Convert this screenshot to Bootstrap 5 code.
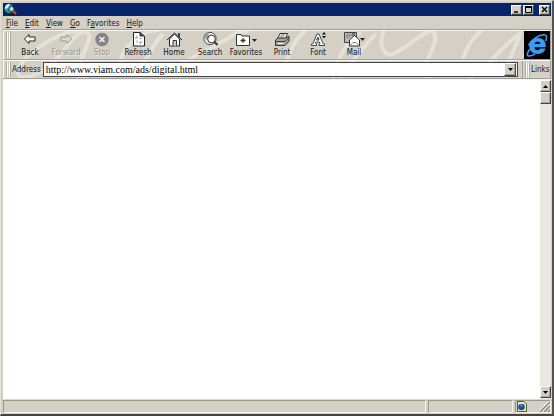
<!DOCTYPE html>
<html lang="en">
<head>
<meta charset="utf-8">
<meta name="viewport" content="width=device-width, initial-scale=1">
<title>Browser window</title>
<link href="https://cdn.jsdelivr.net/npm/bootstrap@5.3.0/dist/css/bootstrap.min.css" rel="stylesheet">
<style>
:root{--face:#d4d0c5;--shade:#8c8a85;--hi:#f8f7f2;--ink:#16161c}
body{font-family:"DejaVu Sans Condensed","DejaVu Sans",sans-serif;font-size:8px;line-height:9px;color:var(--ink);background:var(--face)}
svg{display:block;flex:none}
button{color:inherit;font:inherit;padding:0;border:0;background:none}
.win{border:1px solid #e2dfd5;border-right:2px solid #55534f;border-bottom:2px solid #454440;padding:2px 1px 1px 2px;background:var(--face)}
.titlebar{height:13px;background:#08246b;padding:0 1px 0 1px;gap:1px}
.raised{background:var(--face);border:1px solid;border-color:#fff #444 #444 #fff;box-shadow:inset -1px -1px 0 #aaa79e;display:flex;align-items:center;justify-content:center}
.wbtn{width:11px;height:10px}
.menus{height:14px;border-bottom:1px solid #a19f9b;padding:1px 0 0 3px;gap:7px}
.menus a{color:var(--ink);text-decoration:none}
.menus u{text-decoration-thickness:1px;text-underline-offset:1px}
.bars{border-bottom:1px solid #a19f9b;overflow:hidden}
.swirl{position:absolute;left:0;top:0;z-index:0}
.tools,.addr{z-index:1}
.tools{height:30px;border:1px solid var(--hi);border-right-color:#a19f9b;border-bottom-color:#a19f9b}
.addr{height:18px;border-top:1px solid var(--hi);border-left:1px solid var(--hi);border-right:1px solid #a19f9b}
.addr label{margin-right:2px}
.grip{width:5px;margin:1px 1px 1px 2px;flex:none;border:solid #aaa8a3;border-width:0 1px;background:linear-gradient(90deg,#fff 0 1px,#c9c6bd 1px 2px,#fff 2px 3px)}
.tool{width:36px;display:flex;flex-direction:column;align-items:center;justify-content:flex-end;padding-bottom:2px;flex:none}
.tool:disabled{color:#999792;text-shadow:1px 1px 0 #efece4}
.brand{width:26px;background:#000}
.field{height:15px;border:1px solid #45434a;background:#fff}
.url{font-family:"Liberation Serif",serif;font-size:10px;line-height:13px;color:#000;background:#fff;border:0;padding:0 2px;min-width:0;border-radius:0}
.drop{width:12px;margin-right:1px}
.links{width:28px;border-left:1px solid #a19f9b}
.page-area{background:#fff;border-top:1px solid #f5f4ef}
.scroller{width:11px;background:#e9e7e1;padding-bottom:1px}
.scroller .raised{width:11px;height:12px}
.status{height:14px;border-top:1px solid #dedbd1;gap:2px}
.pane{border:1px solid;border-color:#999790 #f5f3ee #f5f3ee #999790}
.pane-mid{width:85px}.pane-end{width:36px}
</style>
<script src="https://cdn.jsdelivr.net/npm/bootstrap@5.3.0/dist/js/bootstrap.bundle.min.js"></script>
</head>
<body>
<div class="win d-flex flex-column min-vh-100">
  <header class="titlebar d-flex align-items-center">
    <svg width="13" height="13" viewBox="0 0 13 13"><circle cx="5" cy="5.500" r="4.500" fill="#3d91bd"/><path d="M1 4Q3 0 6 1L4 5 1 6z" fill="#d7f0ee"/><path d="M2 7L5 6 6 9 4 10z" fill="#319b54"/><circle cx="7.500" cy="6" r="2.600" fill="#a5e6ec" stroke="#153440"/><path d="M9 8L12 11" stroke="#e13922" stroke-width="2.500"/><path d="M5 11.500H11" stroke="#101820"/></svg>
    <button class="raised wbtn ms-auto" aria-label="Minimize"><svg width="7" height="7"><path d="M1 6H5" stroke="#000" stroke-width="1.500"/></svg></button>
    <button class="raised wbtn" aria-label="Maximize"><svg width="7" height="7"><path d="M.5 1H6.500V6.500H.5z" fill="none" stroke="#000"/><path d="M0 1H7" stroke="#000" stroke-width="2"/></svg></button>
    <button class="raised wbtn ms-1" aria-label="Close"><svg width="7" height="7"><path d="M1 1L6 6M6 1L1 6" stroke="#000" stroke-width="1.400"/></svg></button>
  </header>
  <nav class="menus d-flex align-items-center" aria-label="Menu">
    <a href="#"><u>F</u>ile</a><a href="#"><u>E</u>dit</a><a href="#"><u>V</u>iew</a><a href="#"><u>G</u>o</a><a href="#">F<u>a</u>vorites</a><a href="#"><u>H</u>elp</a>
  </nav>
  <div class="bars position-relative">
    <svg class="swirl" width="548" height="49" viewBox="3 30 548 49" fill="none" stroke="#e5e1d7" stroke-width="4" aria-hidden="true"><path d="M79 30C57 33 25 53 19 68C13 83 34 78 48 67C65 54 73 31 86 32C96 34 79 59 77 74C77 80 82 80 88 77M159 30C145 30 128 42 122 56C118 69 123 78 132 73C148 65 153 41 163 34M167 65C180 68 192 57 207 50C225 42 236 30 249 31M284 77C286 56 293 41 306 30M333 79C337 59 347 39 361 32M340 79C347 68 367 42 376 34M384 30C378 44 383 57 393 54C409 47 423 31 432 31C441 36 430 52 426 64C422 74 427 80 433 79M463 60C465 48 472 39 482 30M468 78C483 75 502 44 520 34C516 48 504 66 506 78"/></svg>
    <div class="tools d-flex position-relative" role="toolbar" aria-label="Standard buttons">
      <span class="grip"></span>
      <button class="tool"><svg width="20" height="18" viewBox="0 0 20 18"><path d="M4.500 9L9 4.500V7H15V11H9V13.500z" fill="#fff" stroke="#222"/></svg>Back</button>
      <button class="tool" disabled><svg width="20" height="18" viewBox="0 0 20 18"><path d="M15.500 9L11 4.500V7H5V11H11V13.500z" fill="#dedbd3" stroke="#9a9893"/></svg>Forward</button>
      <button class="tool" disabled><svg width="20" height="18" viewBox="0 0 20 18"><circle cx="10" cy="9.500" r="6.700" fill="#85838a"/><path d="M7.500 7L12.500 12M12.500 7L7.500 12" stroke="#f0eee8" stroke-width="1.700"/></svg>Stop</button>
      <button class="tool"><svg width="20" height="18" viewBox="0 0 20 18"><path d="M5.500 2.500H12L16.500 6V16H5.500z" fill="#fff" stroke="#222"/><path d="M12 2V6H16" fill="#555" stroke="#333"/><path d="M8 9V7H10M11.500 8.500H13.500M13 11V13H11M9 10.500V12.500" stroke="#888" fill="none"/></svg>Refresh</button>
      <button class="tool"><svg width="20" height="18" viewBox="0 0 20 18"><path d="M14 6V3H16V8" fill="#444"/><path d="M5.500 9V16H15.500V9L10.500 4z" fill="#fff" stroke="#222"/><path d="M3 10L10.500 3 18 10" fill="none" stroke="#222"/><path d="M9 15.500V10.500H12.500V15.500" fill="#ccc" stroke="#333"/></svg>Home</button>
      <button class="tool"><svg width="20" height="18" viewBox="0 0 20 18"><circle cx="10" cy="8.500" r="6.200" fill="#e5e4e0" stroke="#555"/><path d="M5 6L8 3 9 7 6 10z" fill="#999"/><circle cx="11.500" cy="9" r="3.800" fill="#fff" stroke="#333"/><path d="M14.500 12L17.500 15" stroke="#333" stroke-width="2"/></svg>Search</button>
      <button class="tool"><svg width="30" height="18" viewBox="0 0 30 18"><path d="M5.500 4.500H10L11 6H18.500V15.500H5.500z" fill="#fff" stroke="#333"/><path d="M12 8V13M9.500 10.500H14.500M10.500 9L13.500 12M13.500 9L10.500 12" stroke="#333"/><path d="M21 9H26L23.500 12z" fill="#222"/></svg>Favorites</button>
      <button class="tool"><svg width="20" height="18" viewBox="0 0 20 18"><path d="M8 3.500H15.500L13.500 8.500H5.500z" fill="#fff" stroke="#333"/><path d="M8.500 5H13M7.500 7H12" stroke="#777"/><path d="M3.500 10L6 8H14L17 6V11L13 15.500H3.500z" fill="#a5a4a2" stroke="#333"/><path d="M4 11.500H13L17 8" stroke="#444" fill="none"/><path d="M6 13.500H11" stroke="#fff"/></svg>Print</button>
      <button class="tool"><svg width="20" height="18" viewBox="0 0 20 18"><path d="M3.500 15.500V14L5 13.500 9 4H11L15 13.500 16.500 14V15.500H11V14L12 13.500 11.500 12H8L7.500 13.500 8.500 14V15.500zM8.500 10H11L10 7z" fill="#fff" stroke="#444" fill-rule="evenodd"/><path d="M14 4.500L16 2 18 4.500zM14 6L16 8.500 18 6z" fill="#111"/></svg>Font</button>
      <button class="tool"><svg width="32" height="18" viewBox="0 0 32 18"><path d="M6.500 2.500H18.500V12.500H6.500z" fill="#bbbab6" stroke="#444"/><path d="M8 5H14M8 7H12" stroke="#777"/><path d="M14 3H17V6H14z" fill="#777"/><path d="M11.500 10L16.500 5.500 21.500 10V16H11.500z" fill="#fff" stroke="#333"/><path d="M12 15.500L15 12.500H18L21 15.500" fill="none" stroke="#777"/><path d="M22 8H27L24.500 11z" fill="#222"/></svg>Mail</button>
      <span class="brand ms-auto d-flex align-items-center justify-content-center"><svg width="24" height="26" viewBox="0 0 24 26"><path d="M20.500 16.500H15.200Q14.200 18.300 12.500 18.300 9.600 18.300 9.500 15.300H20.800Q21.300 6 12.700 6 4.500 6.300 4.300 14 4.500 21.800 12.500 22 19 21.800 20.500 16.500zM9.600 12Q10 9.500 12.500 9.500T15.500 12z" fill="#3b9cf1" fill-rule="evenodd"/><path d="M5 17Q.5 23 3.500 24 6 24.300 10 22M3.500 13.500C7 7 15 2 20 3Q23 4 20.500 9" fill="none" stroke="#3b9cf1" stroke-width="1.600"/></svg></span>
    </div>
    <div class="addr d-flex align-items-center position-relative">
      <span class="grip align-self-stretch"></span>
      <label for="url" class="flex-shrink-0">Address</label>
      <div class="field d-flex flex-grow-1">
        <input id="url" class="url flex-grow-1" type="text" value="http://www.viam.com/ads/digital.html">
        <button class="raised drop" aria-label="Address history"><svg width="7" height="5"><path d="M1 1H6L3.500 4z"/></svg></button>
      </div>
      <span class="links d-flex align-self-stretch align-items-center ms-1"><span class="grip align-self-stretch"></span>Links</span>
    </div>
  </div>
  <main class="page-area d-flex flex-grow-1">
    <div class="scroller ms-auto d-flex flex-column">
      <button class="raised" aria-label="Scroll up"><svg width="7" height="5"><path d="M1 4H6L3.500 1z"/></svg></button>
      <span class="raised"></span>
      <button class="raised mt-auto" aria-label="Scroll down"><svg width="7" height="5"><path d="M1 1H6L3.500 4z"/></svg></button>
    </div>
  </main>
  <footer class="status d-flex">
    <span class="pane flex-grow-1"></span><span class="pane pane-mid"></span>
    <span class="pane pane-end d-flex align-items-center justify-content-between"><svg width="11" height="11"><path d="M1.500.5H7.500L10.500 3V10.500H1.500z" fill="#f3edb4" stroke="#555b25"/><circle cx="5.500" cy="6" r="3.300" fill="#1d4faa"/><path d="M4 4L6 3 6 6z" fill="#4cc2a0"/></svg><svg width="11" height="11"><path d="M1 11L11 1M5 11L11 5M9 11L11 9" stroke="#8c8a85" stroke-width="1.500"/><path d="M0 10L10 0M4 10L11 3" stroke="#fff"/></svg></span>
  </footer>
</div>
</body>
</html>
